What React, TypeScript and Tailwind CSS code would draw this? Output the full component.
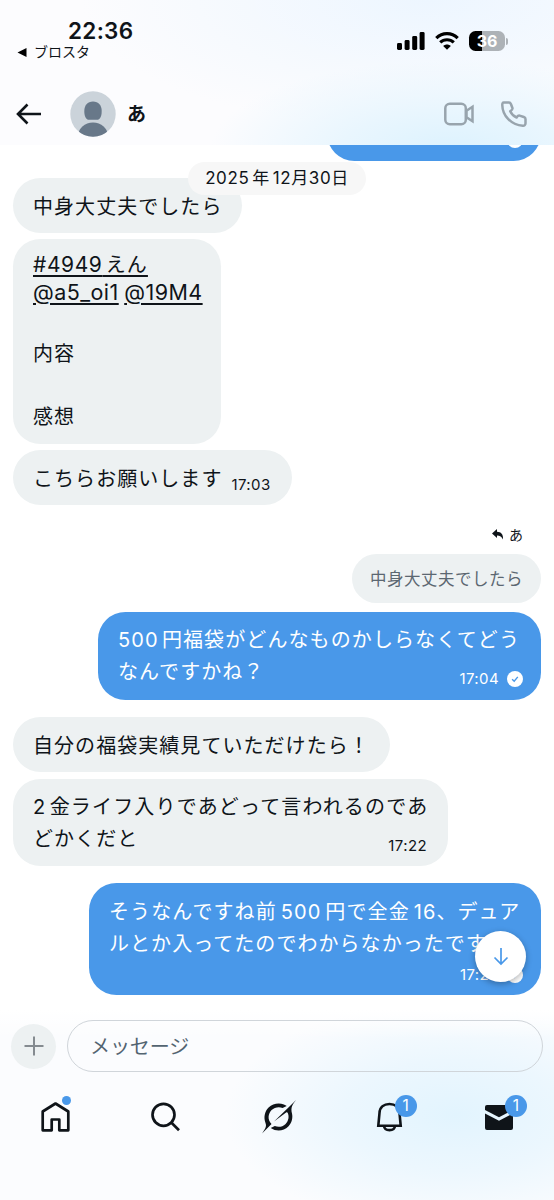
import type { ReactNode } from "react";

function Time({ value, sent = false }: { value: string; sent?: boolean }) {
  return (
    <span className="flex items-center gap-2 text-[15px] leading-[18px] tracking-[0.4px]">
      {value}
      {sent && (
        <svg viewBox="0 0 16 16" className="size-4">
          <circle cx="8" cy="8" r="8" fill="#fff" />
          <path d="M5.1 8.2 7.2 10.2 10.8 5.9" fill="none" stroke="#4998e9" strokeWidth="1.4" />
        </svg>
      )}
    </span>
  );
}

function Bubble({ className, children }: { className: string; children: ReactNode }) {
  return (
    <div className={`relative shrink-0 whitespace-nowrap rounded-[27.5px] pl-5 text-[20px] leading-8 ${className}`}>
      {children}
    </div>
  );
}

function Header() {
  return (
    <header className="z-10 flex h-[145px] shrink-0 flex-col bg-[#fcfcfe] bg-[radial-gradient(ellipse_240px_90px_at_450px_150px,#dcf2fe_0%,#e9f6fe_45%,transparent_100%),radial-gradient(ellipse_350px_130px_at_430px_0px,#edf6ff_0%,transparent_100%)]">
      <div className="flex h-[65px] justify-between pl-[17px] pr-[46px]">
        <div className="pt-[17px]">
          <div className="pl-[51px] text-[22.5px] font-semibold leading-7 tracking-[0.3px]">22:36</div>
          <div className="flex h-[14px] items-center gap-[7px] text-[14px] leading-[14px]">
            <svg viewBox="0 0 10 9" className="h-[9px] w-[10px]"><path d="M0.5 4.5 9.5 0V9Z" /></svg>
            ブロスタ
          </div>
        </div>
        <div className="mt-[31px] flex h-5 items-center gap-[10px]">
          <svg viewBox="0 0 28 18" className="h-[18px] w-7">
            <rect x="0" y="11" width="5" height="7" rx="1.4" />
            <rect x="7.6" y="8" width="5" height="10" rx="1.4" />
            <rect x="15.2" y="4" width="5" height="14" rx="1.4" />
            <rect x="22.6" y="0" width="5" height="18" rx="1.4" />
          </svg>
          <svg viewBox="0 0 24 18" className="h-[18px] w-6">
            <path d="M1.3 6.2C7.3.2 16.7.2 22.7 6.2" fill="none" stroke="#000" strokeWidth="3.2" />
            <path d="M5.2 10.4C9 6.8 15 6.8 18.8 10.4" fill="none" stroke="#000" strokeWidth="3.1" />
            <path d="M8.2 14C10.4 12 13.6 12 15.8 14L12 17.8Z" />
          </svg>
          <div className="flex items-center gap-px">
            <div className="flex h-5 w-[36px] items-center justify-center rounded-[6.5px] bg-[linear-gradient(90deg,#000_36%,#adb2b7_36%)] text-[16px] font-bold leading-5 text-white">36</div>
            <div className="h-[7px] w-[2px] rounded-r-full bg-[#adb2b7]" />
          </div>
        </div>
      </div>
      <div className="flex h-[80px] items-center pl-[16px] pr-[26px] pt-[18px]">
        <svg viewBox="0 0 26 22" className="h-[22px] w-[26px]"><path d="M25 11H2.5M11.5 1.5 2 11l9.5 9.5" fill="none" stroke="#0f1419" strokeWidth="2.6" /></svg>
        <svg viewBox="0 0 46 46" className="ml-[28px] size-[46px]">
          <defs><clipPath id="avatar"><circle cx="23" cy="23" r="22.7" /></clipPath></defs>
          <g clipPath="url(#avatar)">
            <rect width="46" height="46" fill="#cbd3da" />
            <path d="M23 10.500C17.500 10.500 14.300 14.500 14.300 20C14.300 25.800 16.100 28.800 19.100 28.800H26.900C29.900 28.800 31.700 25.800 31.700 20C31.700 14.500 28.500 10.500 23 10.500Z" fill="#687889" />
            <ellipse cx="23" cy="45.500" rx="15" ry="14" fill="#687889" />
          </g>
        </svg>
        <div className="ml-[11px] pt-[1px] text-[19px] font-bold leading-6">あ</div>
        <svg viewBox="0 0 30 24" className="ml-auto h-6 w-[30px]" fill="none" stroke="#98a4ad" strokeWidth="2.5">
          <rect x="1.300" y="1.700" width="20.500" height="20.500" rx="4.500" />
          <path d="M22.500 8.700 28.500 4.800V19.200L22.500 15.300Z" />
        </svg>
        <svg viewBox="0 0 26 26" className="ml-[27px] mr-px size-[26px]" fill="none" stroke="#98a4ad" strokeWidth="2.500" strokeLinejoin="round">
          <path d="M2.800 1.500H8C9.200 1.500 9.600 2.200 10 3.200L11.500 7.300C11.800 8.400 11 9 9.200 10.300C10.500 13 12.800 15.400 15.600 16.500C16.800 14.800 17.500 14.300 18.600 14.600L22.800 16C23.900 16.400 24.500 16.900 24.500 18V22.300C24.500 24 23.500 24.800 21.800 24.700C10.200 24 1.500 14.700 1.300 4.200C1.200 2.500 1.600 1.500 2.800 1.500Z" />
        </svg>
      </div>
    </header>
  );
}

function Chat() {
  return (
    <main className="relative flex h-[865px] shrink-0 flex-col overflow-hidden bg-white px-[13px] tracking-[1.05px] [word-spacing:-3.5px]">
      <Bubble className="-mt-[72px] flex h-[88px] w-[214px] items-end justify-end self-end bg-[#4998e9] pb-3 pr-[18px] text-white">
        <Time value="17:00" sent />
      </Bubble>
      <div className="absolute left-[188px] top-[17px] z-10 flex h-[33px] w-[178px] items-center justify-center whitespace-nowrap rounded-full bg-[#f7f7f7] pt-px text-[17px] tracking-[0.6px] [word-spacing:-2.5px]">2025 年 12月30日</div>
      <Bubble className="mt-[17px] h-[55px] w-[229px] self-start bg-[#edf1f2] pt-[13px]">中身大丈夫でしたら</Bubble>
      <Bubble className="mt-[6px] h-[205px] w-[208px] self-start bg-[#edf1f2] pt-[12px]">
        <div className="leading-[27px] tracking-[1.1px]"><span className="underline decoration-[1.5px] underline-offset-[3px]"><span className="text-[21px] tracking-[0.6px]">#4949</span> えん</span></div>
        <div className="text-[21.500px] leading-[27px] tracking-[0.45px] [word-spacing:-1px]"><span className="underline decoration-[1.5px] underline-offset-[3px]">@a5_oi1</span> <span className="underline decoration-[1.5px] underline-offset-[3px]">@19M4</span></div>
        <div className="pt-[32px] leading-8">内容</div>
        <div className="pt-[31px] leading-8">感想</div>
      </Bubble>
      <Bubble className="mt-[6px] flex h-[55px] w-[279px] gap-[9px] self-start bg-[#edf1f2] pt-[13px]">
        <span>こちらお願いします</span>
        <span className="pt-[13px]"><Time value="17:03" /></span>
      </Bubble>
      <div className="mt-[20px] flex h-[18px] items-center gap-[5px] self-end pr-[17px] text-[14px]">
        <svg viewBox="0 0 12 11" className="h-[11px] w-3"><path d="M0 4.500 5 0V2.800C9 2.800 11.500 5.500 11 10.500C9.700 7.600 8 6.500 5 6.500V9Z" fill="#0f1419" /></svg>
        あ
      </div>
      <div className="mt-[11px] flex h-[49px] w-[189px] shrink-0 items-center self-end whitespace-nowrap rounded-full bg-[#edf1f2] pl-[18px] pt-px text-[16.500px] tracking-[0.500px] text-[#5c6771]">中身大丈夫でしたら</div>
      <Bubble className="mt-[9px] h-[88px] w-[443px] self-end bg-[#4998e9] pt-[12px] text-white">
        <div className="tracking-[1.1px]">500 円福袋がどんなものかしらなくてどう</div>
        <div className="flex justify-between pr-[18px]"><span>なんですかね？</span><span className="pt-[14px]"><Time value="17:04" sent /></span></div>
      </Bubble>
      <Bubble className="mt-[17px] h-[55px] w-[377px] self-start bg-[#edf1f2] pt-[12.500px]">自分の福袋実績見ていただけたら！</Bubble>
      <Bubble className="mt-[7px] h-[87px] w-[435px] self-start bg-[#edf1f2] pt-[12px]">
        <div className="tracking-[1.17px]">2 金ライフ入りであどって言われるのであ</div>
        <div className="flex justify-between pr-[21px]"><span>どかくだと</span><span className="pt-[14px]"><Time value="17:22" /></span></div>
      </Bubble>
      <Bubble className="mt-[17px] h-[112px] w-[452px] self-end bg-[#4998e9] pt-[13px] text-white">
        <div className="tracking-[1.1px] [word-spacing:-2.8px]">そうなんですね前 500 円で全金 16、デュア</div>
        <div>ルとか入ってたのでわからなかったです</div>
        <div className="flex justify-end pr-[18px] pt-[6px]"><Time value="17:24" sent /></div>
      </Bubble>
      <button className="absolute left-[475px] top-[786px] flex size-[51px] items-center justify-center rounded-full bg-white shadow-[0_2px_6px_rgba(0,0,0,0.3)]">
        <svg viewBox="0 0 16 18" className="h-[18px] w-4"><path d="M8 0V16M1.500 9.500 8 16l6.500-6.500" fill="none" stroke="#4998e9" strokeWidth="1.700" /></svg>
      </button>
    </main>
  );
}

function Badge() {
  return <span className="absolute -top-[7px] left-[19px] flex size-[22px] items-center justify-center rounded-full bg-[#4998e9] text-[15.500px] leading-none text-white">1</span>;
}

function Footer() {
  return (
    <footer className="h-[190px] shrink-0 bg-[#fbfcfe] bg-[linear-gradient(180deg,#fff_0%,transparent_15%),radial-gradient(ellipse_230px_115px_at_455px_105px,#e2f4fe_0%,#ecf7fe_48%,transparent_100%)] pt-[10px]">
      <div className="flex items-center gap-[11px] pl-[11px] pr-[11px]">
        <button className="flex size-[45px] items-center justify-center rounded-full bg-[#edf1f2]">
          <svg viewBox="0 0 20 20" className="size-5"><path d="M10 .5V19.500M.5 10H19.500" stroke="#858b90" strokeWidth="2" /></svg>
        </button>
        <div className="flex h-[52px] flex-1 items-center rounded-full border border-[#d0d5da] pl-[22px] pt-[2px] text-[20px] tracking-[-0.1px] text-[#536471]">メッセージ</div>
      </div>
      <nav className="flex h-[92px] justify-between pl-[41px] pr-[40px] pt-[30px]">
        <div className="relative">
          <svg viewBox="0 0 30 30" className="size-[30px]"><path d="M14.500 1.500 27.300 9.500V28.300H18.300V17.500H10.700V28.300H1.700V9.500Z" fill="none" stroke="#0f1419" strokeWidth="2.700" strokeLinejoin="round" /></svg>
          <span className="absolute left-[21px] -top-[6px] size-[9px] rounded-full bg-[#4998e9]" />
        </div>
        <svg viewBox="0 0 30 30" className="size-[30px]" fill="none" stroke="#0f1419" strokeWidth="2.700"><circle cx="12.500" cy="12.800" r="11" /><path d="m20.500 20.800 7.500 7.500" /></svg>
        <svg viewBox="0 0 34 34" className="-mt-[2px] h-[34px] w-[34px]" fill="#0f1419">
          <path d="M12 21.500 24.100 12.500C24.700 12.100 25.500 12.300 25.800 13C27.300 16.600 26.600 20.900 23.600 23.900C20.600 26.900 16.500 27.500 12.800 26.100L8.700 28C14.600 32 21.800 31 26.300 26.500C29.900 22.900 31 18 30 13.600C28.500 7.300 30.300 4.800 34 0L29 5Z" />
          <path d="M9.500 24C5.300 20 6 13.700 9.600 10.100C12.300 7.400 16.700 6.300 20.600 7.900L24.700 6C24 5.500 23 4.900 21.900 4.500C16.800 2.400 10.700 3.500 6.600 7.600C2.600 11.600 1.400 17.700 3.500 22.900C5.100 26.800 2.500 29.500 0 33.500Z" />
        </svg>
        <div className="relative">
          <svg viewBox="0 0 28 30" className="h-[30px] w-7" fill="none" stroke="#0f1419" strokeWidth="2.600"><path d="M3.500 11C3.800 5.200 8 2 13.500 2S23.200 5.200 23.500 11L24.700 23.700H2.300Z" /><path d="M8 24C8.500 29.500 18.500 29.500 19 24" /></svg>
          <Badge />
        </div>
        <div className="relative">
          <svg viewBox="0 0 30 30" className="size-[30px]" fill="#0f1419"><path d="M1 8V5Q1 3 3 3H27Q29 3 29 5V8L15 15.200Z" /><path d="M1 11.500 15 18.700 29 11.500V26Q29 28 27 28H3Q1 28 1 26Z" /></svg>
          <span className="absolute -top-[7px] left-[21px] flex size-[22px] items-center justify-center rounded-full bg-[#4998e9] text-[15.500px] leading-none text-white">1</span>
        </div>
      </nav>
    </footer>
  );
}

export default function App() {
  return (
    <div className="flex h-[1200px] w-[554px] flex-col overflow-hidden bg-white font-['Inter','Noto_Sans_CJK_JP',sans-serif] text-[#0f1419]">
      <Header />
      <Chat />
      <Footer />
    </div>
  );
}
